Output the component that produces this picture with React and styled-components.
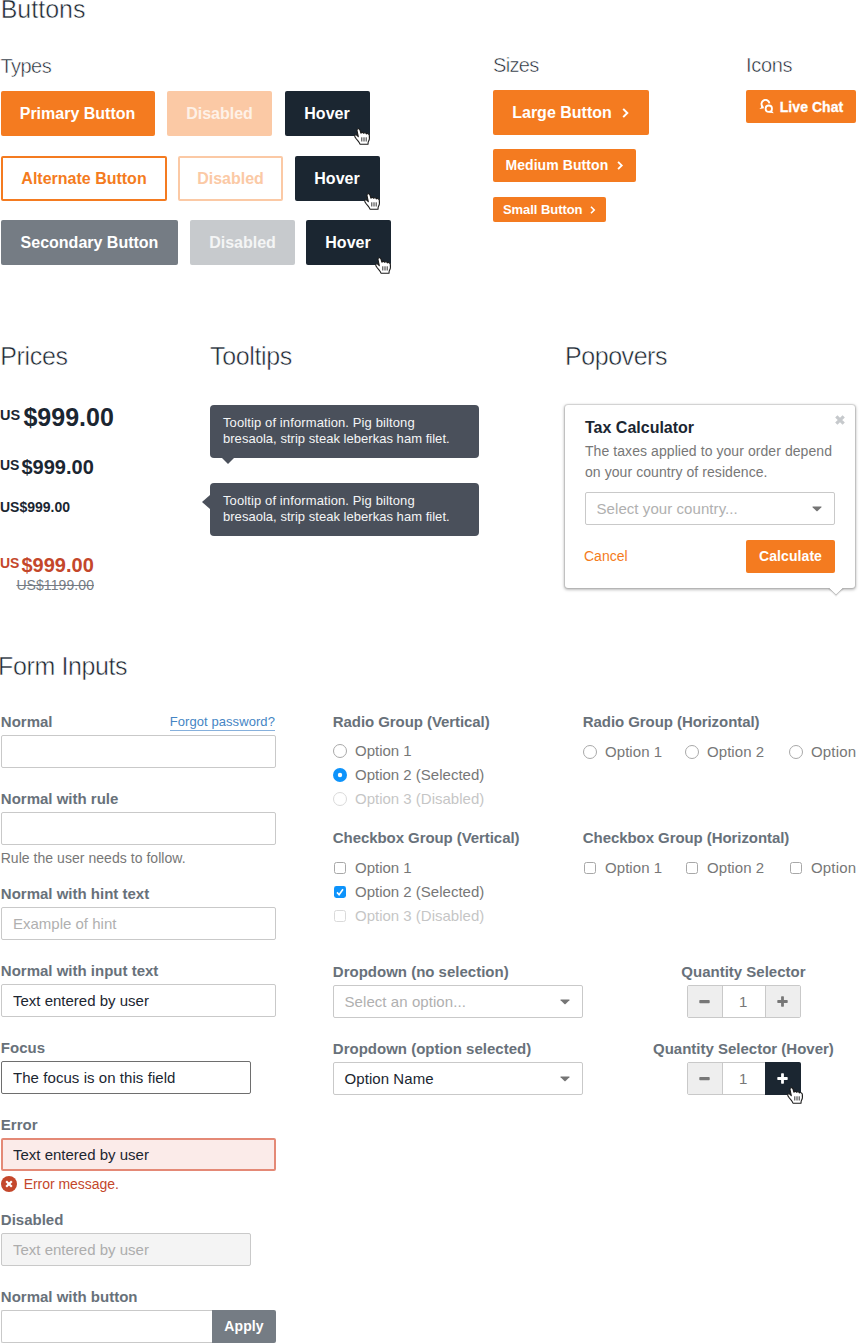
import React from "react";
import styled, { createGlobalStyle, css } from "styled-components";

const c = {
  orange: "#f47b20",
  orangeSoft: "#fbc9a5",
  ink: "#1b2631",
  slate: "#757c84",
  slateSoft: "#c7cacd",
  tooltip: "#4a505b",
  label: "#68717a",
  text: "#777777",
  hint: "#b0b0b0",
  line: "#c9c9c9",
  red: "#c4472b",
  blue: "#0d93fb",
};

const Global = createGlobalStyle`
  *, *::before, *::after { box-sizing: border-box; }
  html, body { margin: 0; background: #fff; overflow: hidden; }
  body, input, button {
    font-family: "Liberation Sans", Arial, sans-serif;
  }
  input, button { margin: 0; padding: 0; border: 0; background: none; }
`;

const Page = styled.main`
  width: 859px;
  height: 1343px;
  overflow: hidden;
  background: #fff;
`;

const Section = styled.section`
  height: ${(p) => p.$h}px;
  display: ${(p) => (p.$row ? "flex" : "block")};
`;

const Row = styled.div`
  display: flex;
  align-items: flex-start;
`;

const Column = styled.div`
  flex: none;
  width: ${(p) => p.$w}px;
  padding-top: ${(p) => p.$top || 0}px;
  padding-left: ${(p) => p.$left || 0}px;
`;

const lightType = css`
  margin: 0;
  font-weight: 400;
  color: ${c.ink};
  white-space: nowrap;
  -webkit-text-stroke: 0.5px #fff;
`;

const Heading = styled.h2`
  ${lightType}
  font-size: 25px;
  line-height: ${(p) => p.$lh || 30}px;
  letter-spacing: ${(p) => p.$ls || 0}px;
  text-indent: ${(p) => p.$indent || 0}px;
`;

const SubHeading = styled.h3`
  ${lightType}
  font-size: 20px;
  line-height: 24px;
  letter-spacing: ${(p) => p.$ls}px;
  text-indent: ${(p) => p.$indent || 0}px;
  margin-bottom: 13px;
`;

const tones = {
  primary: css`background: ${c.orange}; color: #fff;`,
  primaryOff: css`background: ${c.orangeSoft}; color: #fef1e7;`,
  alt: css`border: 2px solid ${c.orange}; color: ${c.orange};`,
  altOff: css`border: 2px solid ${c.orangeSoft}; color: ${c.orangeSoft};`,
  secondary: css`background: ${c.slate}; color: #fff;`,
  secondaryOff: css`background: ${c.slateSoft}; color: #f4f5f5;`,
  hover: css`background: ${c.ink}; color: #fff;`,
};

const sizes = {
  large: css`height: 45px; font-size: 16px; padding-right: ${(p) => (p.$tone && p.$tone !== "hover" ? 0 : 1)}px;`,
  medium: css`height: 33px; font-size: 14px; letter-spacing: 0.08px; padding-bottom: 1px;`,
  small: css`height: 25px; font-size: 13px; letter-spacing: -0.05px;`,
};

const Button = styled.button`
  position: relative;
  display: flex;
  align-items: center;
  justify-content: center;
  gap: ${(p) => p.$gap || 0}px;
  flex: none;
  width: ${(p) => p.$w}px;
  border-radius: 2px;
  font-weight: 700;
  white-space: nowrap;
  ${(p) => sizes[p.$size || "large"]}
  ${(p) => tones[p.$tone || "primary"]}
`;

const ChatButton = styled(Button)`
  padding-bottom: 0;
  letter-spacing: 0.05px;
  -webkit-text-stroke: 0.3px #fff;
`;

const ButtonRow = styled.div`
  display: flex;
  padding-left: 1px;
  margin-bottom: ${(p) => p.$mb}px;
  & > :nth-child(2) { margin-left: ${(p) => p.$g1}px; }
  & > :nth-child(3) { margin-left: ${(p) => p.$g2}px; }
`;

const Stack = styled.div`
  display: flex;
  flex-direction: column;
  & > :nth-child(2) { margin-top: 14px; }
  & > :nth-child(3) { margin-top: 15px; }
`;

const CursorSvg = styled.svg`
  position: absolute;
  left: ${(p) => p.$x}px;
  top: ${(p) => p.$y}px;
  overflow: visible;
`;

const Cursor = ({ x, y }) => (
  <CursorSvg $x={x} $y={y} width="16" height="17" viewBox="0 0 16 17">
    <path
      d="M6 16.2 C5.4 14.2 3.6 12.7 1.8 10.2 C.8 8.9 .3 7.5 1.2 6.9 C2.2 6.4 3.3 7.4 4.3 8.7 L3 2.5 C2.8 .3 5.3 .1 5.9 1.9 L6.9 5.2 C7.5 4 9.2 4.1 9.6 5.3 C10.4 4.4 12 4.7 12.3 5.9 C13.2 5.1 15 5.6 15.3 7.2 C15.7 9.8 15.6 12.2 14.2 14 L14 16.2 Z"
      fill="#fff"
      stroke="#1b1b1b"
      strokeWidth="1.1"
      strokeLinejoin="round"
    />
    <path d="M7.8 9.3v4.2M10 9.3v4.2M12.2 9.3v4.2" stroke="#333" strokeWidth="1" />
  </CursorSvg>
);

const Chevron = ({ size }) => (
  <svg width={size * 0.7} height={size} viewBox="0 0 7 10">
    <path d="M1.2 .9 L5.3 5 L1.2 9.1" fill="none" stroke="#fff" strokeWidth="2" />
  </svg>
);

const ChatIcon = () => (
  <svg width="15" height="15" viewBox="0 0 15 15">
    <path d="M3.7 7.75 A4 4 0 1 1 10.45 4.3" fill="none" stroke="#fff" strokeWidth="1.9" />
    <path d="M1.8 5.8 L4.6 7.6 L5 9.2 L.4 10 L2.2 8.2Z" fill="#fff" />
    <circle cx="9.8" cy="9.7" r="3.2" fill="none" stroke="#fff" strokeWidth="1.8" />
    <path d="M13 10.6 L13.2 12.2 L14.8 14.3 L10 13.6Z" fill="#fff" />
  </svg>
);

const Price = styled.div`
  font-weight: 700;
  white-space: nowrap;
  color: ${(p) => (p.$sale ? c.red : c.ink)};
  font-size: ${(p) => p.$size}px;
  line-height: ${(p) => p.$lh}px;
  margin-top: ${(p) => p.$mt}px;
`;

const Currency = styled.span`
  font-size: ${(p) => p.$size}px;
  line-height: 0;
  vertical-align: ${(p) => p.$rise}px;
  margin-right: ${(p) => p.$mr}px;
`;

const OldPrice = styled.div`
  width: 94px;
  text-align: right;
  font-size: 14px;
  line-height: 16px;
  letter-spacing: 0.08px;
  color: ${c.slate};
  text-decoration: line-through;
`;

const Tooltip = styled.div`
  position: relative;
  width: 269px;
  height: 53px;
  margin-top: ${(p) => p.$mt}px;
  padding: 10px 13px;
  border-radius: 4px;
  background: ${c.tooltip};
  color: #f4f5f6;
  font-size: 13px;
  line-height: 16px;
  white-space: nowrap;
  &::after {
    content: "";
    position: absolute;
    ${(p) =>
      p.$side === "bottom"
        ? css`
            left: 12px;
            top: 53px;
            border: 6.5px solid transparent;
            border-top: 6px solid ${c.tooltip};
            border-bottom: 0;
          `
        : css`
            left: -8px;
            top: 12px;
            border: 7px solid transparent;
            border-right: 8px solid ${c.tooltip};
            border-left: 0;
          `}
  }
`;

const TooltipLine = styled.div`
  letter-spacing: ${(p) => p.$ls || 0.03}px;
`;

const TooltipText = () => (
  <>
    <TooltipLine $ls={0.11}>Tooltip of information. Pig biltong</TooltipLine>
    <TooltipLine>bresaola, strip steak leberkas ham filet.</TooltipLine>
  </>
);

const Popover = styled.div`
  position: relative;
  width: 290px;
  height: 183px;
  margin: 34px 0 0;
  padding: 13px 20px 0;
  background: #fff;
  border-radius: 3px;
  box-shadow: 0 0 1px 1px rgba(0, 0, 0, 0.1), 0 1px 3px 1px rgba(0, 0, 0, 0.26);
`;

const PopoverTail = styled.svg`
  position: absolute;
  left: 262px;
  top: 182px;
`;

const PopoverClose = styled.svg`
  position: absolute;
  right: 10px;
  top: 10px;
`;

const PopoverTitle = styled.div`
  font-size: 16px;
  line-height: 20px;
  font-weight: 700;
  color: ${c.ink};
`;

const PopoverText = styled.p`
  margin: 3px 0 9px;
  font-size: 14px;
  line-height: 21px;
  letter-spacing: 0.07px;
  color: ${c.text};
  white-space: nowrap;
`;

const PopoverActions = styled.div`
  display: flex;
  align-items: center;
  justify-content: space-between;
  width: 250px;
  margin-top: 15px;
`;

const CancelLink = styled.a`
  margin: 0 0 1px -1px;
  font-size: 14px;
  color: ${c.orange};
`;

const SelectBox = styled.div`
  display: flex;
  align-items: center;
  justify-content: space-between;
  width: 250px;
  height: 33px;
  padding: 0 12px 0 10.5px;
  border: 1px solid ${c.line};
  border-radius: 2px;
  background: #fff;
  font-size: 15px;
  line-height: 31px;
  letter-spacing: 0.07px;
  color: ${(p) => (p.$filled ? c.ink : c.hint)};
`;

const Select = ({ filled, children }) => (
  <SelectBox $filled={filled}>
    {children}
    <svg width="10" height="6" viewBox="0 0 10 6">
      <path d="M0.8 .5 H9.2 Q9.8 .6 9.4 1.2 L5.6 5.1 Q5 5.6 4.4 5.1 L.6 1.2 Q.2 .6 .8 .5Z" fill="#757575" />
    </svg>
  </SelectBox>
);

const Field = styled.div`
  margin-bottom: 21px;
`;

const LabelLine = styled.div`
  display: flex;
  justify-content: space-between;
  width: 274px;
`;

const Label = styled.div`
  margin: 0 0 3px -0.2px;
  font-size: 15px;
  line-height: 20px;
  font-weight: 700;
  color: ${c.label};
  white-space: nowrap;
`;

const ForgotLink = styled.a`
  height: 19px;
  border-bottom: 1px solid #86b0dc;
  font-size: 13px;
  line-height: 20px;
  letter-spacing: 0.08px;
  color: #4585c4;
`;

const inputStates = {
  normal: css`border: 1px solid ${c.line}; padding: 0 11px; color: ${c.ink};`,
  focus: css`border: 1px solid #6e6e6e; padding: 0 11px; color: ${c.ink}; letter-spacing: 0.06px;`,
  error: css`border: 2px solid #e48976; padding: 0 10px; color: ${c.ink}; background: #fbebe9;`,
  disabled: css`border: 1px solid ${c.line}; padding: 0 11px; color: #adadad; background: #f4f4f4;`,
};

const Input = styled.input`
  display: block;
  width: ${(p) => p.$w || 275}px;
  height: 33px;
  border-radius: 2px;
  background: #fff;
  font-size: 15px;
  outline: none;
  ${(p) => inputStates[p.$state || "normal"]}
  &::placeholder { color: ${c.hint}; opacity: 1; }
`;

const Help = styled.div`
  display: flex;
  align-items: center;
  gap: 7px;
  margin: 3px 0 -5px -0.3px;
  font-size: 14px;
  line-height: 20px;
  letter-spacing: ${(p) => (p.$error ? -0.04 : 0.04)}px;
  color: ${(p) => (p.$error ? c.red : c.text)};
`;

const Joined = styled.div`
  display: flex;
  & > input { border-right: 0; border-radius: 2px 0 0 2px; }
  & > button { border-radius: 0 2px 2px 0; }
`;

const Options = styled.div`
  display: flex;
  flex-direction: ${(p) => (p.$horizontal ? "row" : "column")};
  margin-top: ${(p) => p.$mt}px;
  margin-bottom: ${(p) => p.$mb || 0}px;
`;

const OptionRow = styled.label`
  display: flex;
  align-items: center;
  gap: 8px;
  flex: none;
  width: ${(p) => (p.$w ? `${p.$w}px` : "auto")};
  height: 24px;
  font-size: 15px;
  line-height: 24px;
  letter-spacing: ${(p) => p.$ls || 0}px;
  white-space: nowrap;
  color: ${c.text};
  opacity: ${(p) => (p.$off ? 0.42 : 1)};
`;

const Mark = ({ kind, on }) => (
  <svg width="14" height="14" viewBox="0 0 14 14">
    {kind === "radio" ? (
      on ? (
        <>
          <circle cx="7" cy="7" r="7" fill={c.blue} />
          <circle cx="7" cy="7" r="2.2" fill="#fff" />
        </>
      ) : (
        <circle cx="7" cy="7" r="6.5" fill="#fff" stroke="#a8a8a8" />
      )
    ) : on ? (
      <>
        <rect x="1" y="1" width="12" height="12" rx="2.4" fill={c.blue} />
        <path d="M4 7.4 L6.1 9.7 L10 4.2" fill="none" stroke="#fff" strokeWidth="1.6" />
      </>
    ) : (
      <rect x="1.5" y="1.5" width="11" height="11" rx="2" fill="#fff" stroke="#a8a8a8" />
    )}
  </svg>
);

const Option = ({ kind, on, off, w, ls, children }) => (
  <OptionRow $off={off} $w={w} $ls={ls}>
    <Mark kind={kind} on={on} />
    {children}
  </OptionRow>
);

const VerticalOptions = ({ kind, mt, mb }) => (
  <Options $mt={mt} $mb={mb}>
    <Option kind={kind}>Option 1</Option>
    <Option kind={kind} on>Option 2 (Selected)</Option>
    <Option kind={kind} off>Option 3 (Disabled)</Option>
  </Options>
);

const HorizontalOptions = ({ kind, mt, mb }) => (
  <Options $horizontal $mt={mt} $mb={mb}>
    <Option kind={kind} w={102} ls={0.06}>Option 1</Option>
    <Option kind={kind} w={104} ls={0.06}>Option 2</Option>
    <Option kind={kind} ls={0.16}>Option</Option>
  </Options>
);

const GroupLabel = styled(Label)`
  margin-bottom: 0;
  letter-spacing: -0.07px;
`;

const QuantityColumn = styled.div`
  display: flex;
  flex-direction: column;
  align-items: center;
  width: 180px;
  margin-left: 70.5px;
`;

const Quantity = styled.div`
  position: relative;
  display: flex;
  width: 114px;
  height: 33px;
  margin: 0 -0.5px 21px 0;
  border: 1px solid ${c.line};
  border-radius: 2px;
`;

const Step = styled.button`
  display: flex;
  align-items: center;
  justify-content: center;
  flex: none;
  width: 34px;
  height: 31px;
  background: #eeeeee;
  color: #777;
  ${(p) =>
    p.$hover &&
    css`
      width: 36px;
      height: 33px;
      margin: -1px -1px -1px 0;
      background: ${c.ink};
      color: #fff;
      border-radius: 0 2px 2px 0;
    `}
`;

const Count = styled.div`
  flex: 1;
  padding-right: 1px;
  border-left: 1px solid ${c.line};
  border-right: ${(p) => (p.$hover ? 0 : 1)}px solid ${c.line};
  text-align: center;
  font-size: 15px;
  line-height: 31px;
  color: ${c.text};
`;

const QuantitySelector = ({ hover }) => (
  <Quantity>
    <Step>
      <svg width="11" height="11" viewBox="0 0 11 11">
        <rect x="0.3" y="4" width="10.4" height="3.2" rx=".8" fill="currentColor" />
      </svg>
    </Step>
    <Count $hover={hover}>1</Count>
    <Step $hover={hover}>
      <svg width="11" height="11" viewBox="0 0 11 11">
        <path
          d="M4.7 .3h1.6q.6 0 .6.6v3.2h3.2q.6 0 .6.6v1.6q0 .6-.6.6H6.9v3.2q0 .6-.6.6H4.7q-.6 0-.6-.6V6.9H.9q-.6 0-.6-.6V4.7q0-.6.6-.6h3.2V.9q0-.6.6-.6z"
          fill="currentColor"
        />
      </svg>
    </Step>
    {hover && <Cursor x={99} y={24} />}
  </Quantity>
);

const ErrorIcon = () => (
  <svg width="16" height="16" viewBox="0 0 16 16">
    <circle cx="8" cy="8" r="8" fill={c.red} />
    <path d="M5.2 5.2 L10.8 10.8 M10.8 5.2 L5.2 10.8" stroke="#fff" strokeWidth="2.2" />
  </svg>
);

export default function App() {
  return (
    <Page>
      <Global />
      <Section $h={341}>
        <Heading $lh={18} $indent={0.7}>Buttons</Heading>
        <Row>
          <Column $w={493} $top={36}>
            <SubHeading $ls={-0.55} $indent={0.5}>Types</SubHeading>
            <ButtonRow $g1={12} $g2={13} $mb={20}>
              <Button $w={154}>Primary Button</Button>
              <Button $w={105} $tone="primaryOff">Disabled</Button>
              <Button $w={85} $tone="hover">Hover<Cursor x={69} y={37} /></Button>
            </ButtonRow>
            <ButtonRow $g1={11} $g2={12} $mb={19}>
              <Button $w={166} $tone="alt">Alternate Button</Button>
              <Button $w={105} $tone="altOff">Disabled</Button>
              <Button $w={85} $tone="hover">Hover<Cursor x={69} y={37} /></Button>
            </ButtonRow>
            <ButtonRow $g1={12} $g2={11} $mb={0}>
              <Button $w={177} $tone="secondary">Secondary Button</Button>
              <Button $w={105} $tone="secondaryOff">Disabled</Button>
              <Button $w={85} $tone="hover">Hover<Cursor x={69} y={37} /></Button>
            </ButtonRow>
          </Column>
          <Column $w={253} $top={35}>
            <SubHeading $ls={-0.65}>Sizes</SubHeading>
            <Stack>
              <Button $w={156} $gap={10}>Large Button<Chevron size={10} /></Button>
              <Button $w={143} $size="medium" $gap={9}>Medium Button<Chevron size={9} /></Button>
              <Button $w={113} $size="small" $gap={8}>Small Button<Chevron size={8} /></Button>
            </Stack>
          </Column>
          <Column $w={113} $top={35}>
            <SubHeading $ls={-0.3}>Icons</SubHeading>
            <ChatButton $w={110} $size="medium" $gap={6}><ChatIcon />Live Chat</ChatButton>
          </Column>
        </Row>
      </Section>

      <Section $h={310} $row>
        <Column $w={210}>
          <Heading $ls={-0.35} $indent={0.3}>Prices</Heading>
          <Price $size={25} $lh={30} $mt={31}>
            <Currency $size={14.5} $rise={6} $mr={3.3}>US</Currency>$999.00
          </Price>
          <Price $size={20} $lh={24} $mt={23}>
            <Currency $size={14} $rise={4} $mr={2}>US</Currency>$999.00
          </Price>
          <Price $size={14} $lh={20} $mt={18}>US$999.00</Price>
          <Price $size={20} $lh={24} $mt={36} $sale>
            <Currency $size={14} $rise={4} $mr={2}>US</Currency>$999.00
          </Price>
          <OldPrice>US$1199.00</OldPrice>
        </Column>
        <Column $w={355}>
          <Heading $ls={-0.35}>Tooltips</Heading>
          <Tooltip $mt={34} $side="bottom"><TooltipText /></Tooltip>
          <Tooltip $mt={25} $side="left"><TooltipText /></Tooltip>
        </Column>
        <Column $w={294}>
          <Heading $ls={-0.45}>Popovers</Heading>
          <Popover>
            <PopoverTitle>Tax Calculator</PopoverTitle>
            <PopoverText>
              The taxes applied to your order depend<br />on your country of residence.
            </PopoverText>
            <Select>Select your country...</Select>
            <PopoverActions>
              <CancelLink>Cancel</CancelLink>
              <Button $w={89} $size="medium">Calculate</Button>
            </PopoverActions>
            <PopoverClose width="10" height="10" viewBox="0 0 10 10">
              <path d="M1.3 1.3 L8.7 8.7 M8.7 1.3 L1.3 8.7" stroke="#c6c9cc" strokeWidth="3.2" />
            </PopoverClose>
            <PopoverTail width="18" height="10" viewBox="0 0 18 10">
              <path d="M2 1.5 L9 8.3 L16 1.5" fill="none" stroke="#000" strokeOpacity=".1" strokeWidth="2" />
              <path d="M2 1 L9 7.6 L16 1" fill="none" stroke="#000" strokeOpacity=".22" strokeWidth="1" />
              <path d="M2 0 H16 V1 L9 7.2 L2 1Z" fill="#fff" />
            </PopoverTail>
          </Popover>
        </Column>
      </Section>

      <Section $h={692}>
        <Heading $ls={-0.4} $indent={-1.9}>Form Inputs</Heading>
        <Row>
          <Column $w={333} $top={31} $left={1}>
            <Field>
              <LabelLine>
                <Label>Normal</Label>
                <ForgotLink>Forgot password?</ForgotLink>
              </LabelLine>
              <Input readOnly />
            </Field>
            <Field>
              <Label>Normal with rule</Label>
              <Input readOnly />
              <Help>Rule the user needs to follow.</Help>
            </Field>
            <Field>
              <Label>Normal with hint text</Label>
              <Input readOnly placeholder="Example of hint" />
            </Field>
            <Field>
              <Label>Normal with input text</Label>
              <Input readOnly defaultValue="Text entered by user" />
            </Field>
            <Field>
              <Label>Focus</Label>
              <Input readOnly $w={250} $state="focus" defaultValue="The focus is on this field" />
            </Field>
            <Field>
              <Label>Error</Label>
              <Input readOnly $state="error" defaultValue="Text entered by user" />
              <Help $error><ErrorIcon />Error message.</Help>
            </Field>
            <Field>
              <Label>Disabled</Label>
              <Input disabled $w={250} $state="disabled" defaultValue="Text entered by user" />
            </Field>
            <Field>
              <Label>Normal with button</Label>
              <Joined>
                <Input readOnly $w={211} />
                <Button $w={64} $size="medium" $tone="secondary">Apply</Button>
              </Joined>
            </Field>
          </Column>
          <Column $w={526} $top={31}>
            <Row>
              <Column $w={250}>
                <GroupLabel>Radio Group (Vertical)</GroupLabel>
                <VerticalOptions kind="radio" mt={7} mb={17} />
                <GroupLabel>Checkbox Group (Vertical)</GroupLabel>
                <VerticalOptions kind="checkbox" mt={8} mb={34} />
              </Column>
              <Column $w={276}>
                <GroupLabel>Radio Group (Horizontal)</GroupLabel>
                <HorizontalOptions kind="radio" mt={8} mb={64} />
                <GroupLabel>Checkbox Group (Horizontal)</GroupLabel>
                <HorizontalOptions kind="checkbox" mt={8} />
              </Column>
            </Row>
            <Row>
              <Column $w={250}>
                <Field>
                  <Label>Dropdown (no selection)</Label>
                  <Select>Select an option...</Select>
                </Field>
                <Field>
                  <Label>Dropdown (option selected)</Label>
                  <Select filled>Option Name</Select>
                </Field>
              </Column>
              <QuantityColumn>
                <Label>Quantity Selector</Label>
                <QuantitySelector />
                <Label>Quantity Selector (Hover)</Label>
                <QuantitySelector hover />
              </QuantityColumn>
            </Row>
          </Column>
        </Row>
      </Section>
    </Page>
  );
}
